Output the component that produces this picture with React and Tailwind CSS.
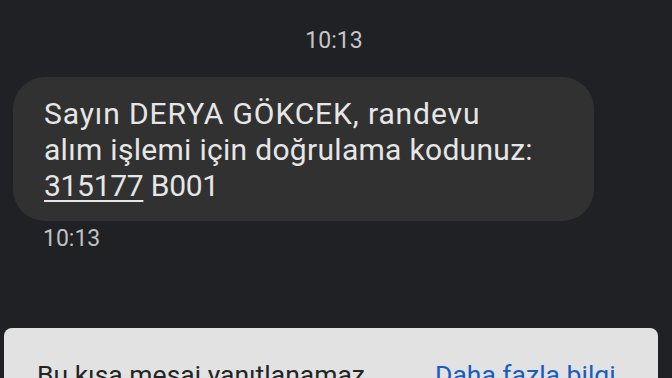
export default function App() {
  return (
    <div className="w-[672px] h-[378px] overflow-hidden bg-[#202124] flex flex-col relative" style={{ fontFamily: "Roboto, 'Noto Sans', sans-serif" }}>
      <div className="mt-[27px] h-[28px] text-center text-[23px] leading-[28px] text-[#c6c6c6] pr-[4px]">10:13</div>
      <div className="mt-[22px] ml-[13px] w-[581px] h-[144px] rounded-[32px] bg-[#313131] pl-[31px] pt-[19px] text-[30px] leading-[36px] text-[#e6e6e6]">
        <div className="whitespace-nowrap tracking-[0.03em]">Sayın DERYA GÖKCEK, randevu</div>
        <div className="whitespace-nowrap tracking-[0.01em]">alım işlemi için doğrulama kodunuz:</div>
        <div className="whitespace-nowrap"><span className="underline decoration-[2px] underline-offset-[4px] tracking-[-0.01em]">315177</span> <span className="tracking-[-0.01em]">B001</span></div>
      </div>
      <div className="mt-[4px] ml-[43px] text-[23px] leading-[28px] text-[#c0c0c0]">10:13</div>
      <div className="mt-auto ml-[4px] w-[654px] h-[50px] rounded-t-[8px] bg-[#e2e2e2] flex items-start pl-[33px] pt-[32px] text-[26.5px] leading-[30px]">
        <span className="text-[#242424] whitespace-nowrap">Bu kısa mesaj yanıtlanamaz</span>
        <span className="ml-[70px] text-[#1a5cbf] whitespace-nowrap">Daha fazla bilgi</span>
      </div>
    </div>
  );
}
